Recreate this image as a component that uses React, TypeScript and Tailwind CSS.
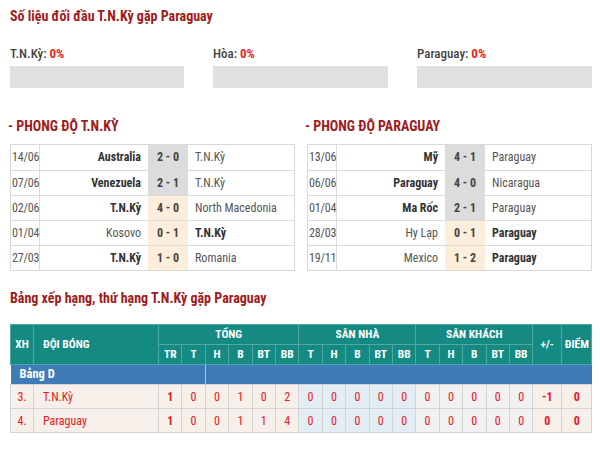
const font = "font-['Roboto','Liberation_Sans',sans-serif] font-stretch-condensed";

type FormRow = { date: string; home: string; score: string; away: string; win: "home" | "away" | "none"; hl: boolean };

const tnkForm: FormRow[] = [
  { date: "14/06", home: "Australia", score: "2 - 0", away: "T.N.Kỳ", win: "home", hl: false },
  { date: "07/06", home: "Venezuela", score: "2 - 1", away: "T.N.Kỳ", win: "home", hl: false },
  { date: "02/06", home: "T.N.Kỳ", score: "4 - 0", away: "North Macedonia", win: "home", hl: true },
  { date: "01/04", home: "Kosovo", score: "0 - 1", away: "T.N.Kỳ", win: "away", hl: true },
  { date: "27/03", home: "T.N.Kỳ", score: "1 - 0", away: "Romania", win: "home", hl: true },
];

const parForm: FormRow[] = [
  { date: "13/06", home: "Mỹ", score: "4 - 1", away: "Paraguay", win: "home", hl: false },
  { date: "06/06", home: "Paraguay", score: "4 - 0", away: "Nicaragua", win: "home", hl: false },
  { date: "01/04", home: "Ma Rốc", score: "2 - 1", away: "Paraguay", win: "home", hl: false },
  { date: "28/03", home: "Hy Lạp", score: "0 - 1", away: "Paraguay", win: "away", hl: true },
  { date: "19/11", home: "Mexico", score: "1 - 2", away: "Paraguay", win: "away", hl: true },
];

function FormTable({ title, rows }: { title: string; rows: FormRow[] }) {
  return (
    <div className="w-[285px]">
      <div className="text-[14px] font-bold text-[#a01b1b] leading-[20px] -ml-[2px]">{title}</div>
      <div className="mt-[8px] border border-[#d9d9d9]">
        {rows.map((r, i) => (
          <div key={i} className={`flex h-[25px] text-[12px] leading-[24px] ${i > 0 ? "border-t border-[#dcdcdc]" : ""}`}>
            <div className="w-[29px] border-r border-[#dcdcdc] pl-[1px] text-[#555] tracking-[-0.2px]">{r.date}</div>
            <div className={`w-[108px] pr-[7px] text-right ${r.win === "home" ? "font-bold text-[#333]" : "text-[#555]"}`}>{r.home}</div>
            <div className={`w-[40px] text-center font-bold text-[#444] ${r.hl ? "bg-[#fdeedb]" : "bg-[#dcdcdc]"}`}>{r.score}</div>
            <div className={`flex-1 pl-[7px] ${r.win === "away" ? "font-bold text-[#333]" : "text-[#555]"}`}>{r.away}</div>
          </div>
        ))}
      </div>
    </div>
  );
}

const statHead = ["TR", "T", "H", "B", "BT", "BB"];
const sub = ["T", "H", "B", "BT", "BB"];

type Stand = { pos: string; team: string; tong: string[]; nha: string[]; khach: string[]; diff: string; pts: string };
const standings: Stand[] = [
  { pos: "3.", team: "T.N.Kỳ", tong: ["1", "0", "0", "1", "0", "2"], nha: ["0", "0", "0", "0", "0"], khach: ["0", "0", "0", "0", "0"], diff: "-1", pts: "0" },
  { pos: "4.", team: "Paraguay", tong: ["1", "0", "0", "1", "1", "4"], nha: ["0", "0", "0", "0", "0"], khach: ["0", "0", "0", "0", "0"], diff: "0", pts: "0" },
];

export default function App() {
  const th = "border border-[#4fa9a2] text-white font-bold text-[11.5px] text-center p-0";
  const td = "border border-[#d3d3d3] text-center text-[12px] p-0 text-[#e3201b]";
  return (
    <div className={`w-[600px] h-[450px] bg-white overflow-hidden ${font}`}>
      <div className="pl-[10px] pr-[8px] pt-[6px]">
        <div className="text-[14px] font-bold text-[#a01b1b] leading-[20px]">Số liệu đối đầu T.N.Kỳ gặp Paraguay</div>

        <div className="mt-[18px] flex justify-between">
          {[["T.N.Kỳ", "w-[174px]"], ["Hòa", "w-[175px]"], ["Paraguay", "w-[175px]"]].map(([l, w]) => (
            <div key={l} className={w}>
              <div className="text-[13px] leading-[19px] font-medium text-[#444]">
                {l}: <span className="text-[#e8261f] font-bold">0%</span>
              </div>
              <div className="mt-[3px] h-[22px] bg-[#e0e0e0]" />
            </div>
          ))}
        </div>

        <div className="mt-[28px] flex justify-between">
          <FormTable title="- PHONG ĐỘ T.N.KỲ" rows={tnkForm} />
          <FormTable title="- PHONG ĐỘ PARAGUAY" rows={parForm} />
        </div>

        <div className="mt-[17px] text-[14px] font-bold text-[#a01b1b] leading-[20px]">Bảng xếp hạng, thứ hạng T.N.Kỳ gặp Paraguay</div>

        <table className="mt-[16px] w-[582px] table-fixed border-collapse">
          <colgroup>
            <col className="w-[23px]" />
            <col className="w-[125px]" />
            {Array.from({ length: 16 }).map((_, i) => (
              <col key={i} className="w-[23.4px]" />
            ))}
            <col className="w-[29px]" />
            <col className="w-[30px]" />
          </colgroup>
          <thead className="bg-[#148a83]">
            <tr className="h-[20px]">
              <th rowSpan={2} className={th}>XH</th>
              <th rowSpan={2} className={`${th} text-left pl-[9px]`}>ĐỘI BÓNG</th>
              <th colSpan={6} className={th}>TỔNG</th>
              <th colSpan={5} className={th}>SÂN NHÀ</th>
              <th colSpan={5} className={th}>SÂN KHÁCH</th>
              <th rowSpan={2} className={th}>+/-</th>
              <th rowSpan={2} className={th}>ĐIỂM</th>
            </tr>
            <tr className="h-[20px]">
              {statHead.map((h) => (
                <th key={"a" + h} className={th}>{h}</th>
              ))}
              {sub.map((h) => (
                <th key={"b" + h} className={th}>{h}</th>
              ))}
              {sub.map((h) => (
                <th key={"c" + h} className={th}>{h}</th>
              ))}
            </tr>
          </thead>
          <tbody>
            <tr className="h-[20px] bg-[#3f7cb6]">
              <td colSpan={4} className="border-r border-[#a9c4de] text-white font-bold text-[12.5px] pl-[9px] p-0">Bảng D</td>
              <td colSpan={16} className="p-0" />
            </tr>
            {standings.map((s) => (
              <tr key={s.pos} className="h-[24px]">
                <td className={`${td} bg-[#f6efea]`}>{s.pos}</td>
                <td className={`${td} bg-[#f6efea] text-left pl-[9px] text-[12.5px]`}>{s.team}</td>
                {s.tong.map((v, i) => (
                  <td key={"t" + i} className={`${td} bg-[#f6efea] ${i === 0 ? "font-bold" : ""}`}>{v}</td>
                ))}
                {s.nha.map((v, i) => (
                  <td key={"n" + i} className={`${td} bg-[#e3edf4]`}>{v}</td>
                ))}
                {s.khach.map((v, i) => (
                  <td key={"k" + i} className={`${td} bg-[#f1f1f1]`}>{v}</td>
                ))}
                <td className={`${td} bg-[#f6efea] font-bold`}>{s.diff}</td>
                <td className={`${td} bg-[#f6efea] font-bold`}>{s.pts}</td>
              </tr>
            ))}
          </tbody>
        </table>
      </div>
    </div>
  );
}
